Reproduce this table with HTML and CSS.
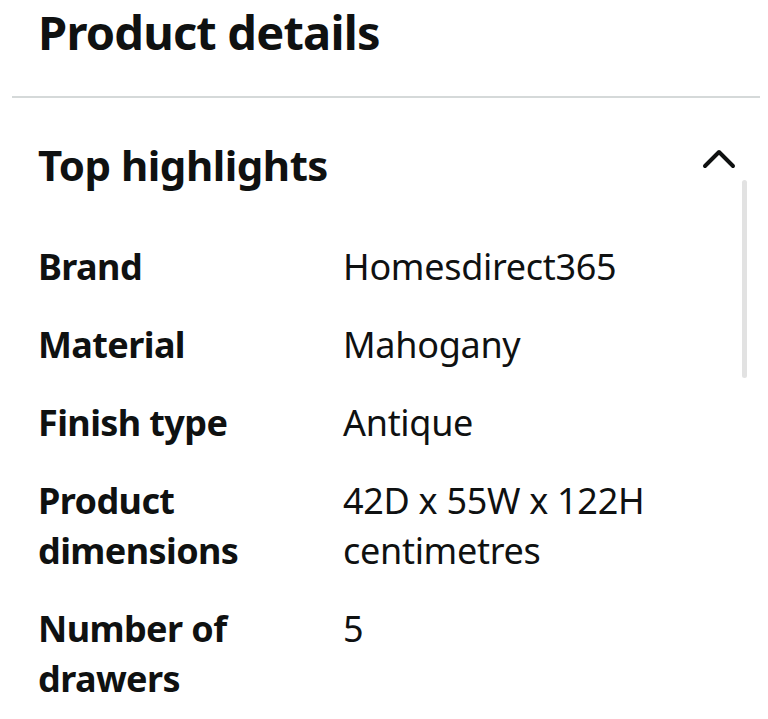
FILE: index.html
```html
<!DOCTYPE html>
<html lang="en">
<head>
<meta charset="utf-8">
<title>Product details</title>
<link rel="stylesheet" href="styles.css">
</head>
<body>
<div class="page">
  <h1 class="title">Product details</h1>
  <hr class="divider">
  <section class="section">
    <div class="section-head">
      <h2 class="section-title">Top highlights</h2>
      <svg class="chevron" width="34" height="22" viewBox="0 0 34 22" aria-hidden="true">
        <polyline points="3,19 17,5 31,19" fill="none" stroke="#0f1111" stroke-width="4" stroke-linecap="round" stroke-linejoin="round"/>
      </svg>
    </div>
    <div class="specs">
      <div class="label">Brand</div><div class="value">Homesdirect365</div>
      <div class="label">Material</div><div class="value">Mahogany</div>
      <div class="label">Finish type</div><div class="value">Antique</div>
      <div class="label">Product dimensions</div><div class="value">42D x 55W x 122H centimetres</div>
      <div class="label">Number of drawers</div><div class="value">5</div>
    </div>
    <div class="scrollbar"></div>
  </section>
</div>
</body>
</html>
```
FILE: styles.css
```css
html, body {
  margin: 0;
  padding: 0;
  background: #ffffff;
}
body {
  font-family: "Noto Sans", "Open Sans", Arial, sans-serif;
  color: #0f1111;
  width: 768px;
  height: 719px;
  overflow: hidden;
}
.page {
  position: relative;
}
.title {
  margin: 0;
  padding-left: 38px;
  font-size: 47px;
  line-height: 64px;
  font-weight: 700;
  letter-spacing: -0.8px;
}
.divider {
  margin: 32px 8px 0 12px;
  border: 0;
  height: 2px;
  background: #d5d9d9;
}
.section {
  position: relative;
  padding: 39px 33px 0 38px;
}
.section-head {
  display: flex;
  justify-content: space-between;
  align-items: flex-start;
}
.section-title {
  margin: 0;
  font-size: 42px;
  line-height: 56px;
  font-weight: 700;
  letter-spacing: -0.5px;
}
.chevron {
  margin-top: 10px;
  margin-right: -1px;
}
.specs {
  margin-top: 49px;
  display: grid;
  grid-template-columns: 270px 1fr;
  column-gap: 35px;
  row-gap: 28px;
  font-size: 36px;
  line-height: 50px;
}
.label {
  font-weight: 700;
  letter-spacing: -0.6px;
}
.value {
  font-weight: 400;
  letter-spacing: -0.3px;
  max-width: 330px;
}
.scrollbar {
  position: absolute;
  left: 742px;
  top: 82px;
  width: 5px;
  height: 198px;
  border-radius: 3px;
  background: #e2e2e2;
}
```
